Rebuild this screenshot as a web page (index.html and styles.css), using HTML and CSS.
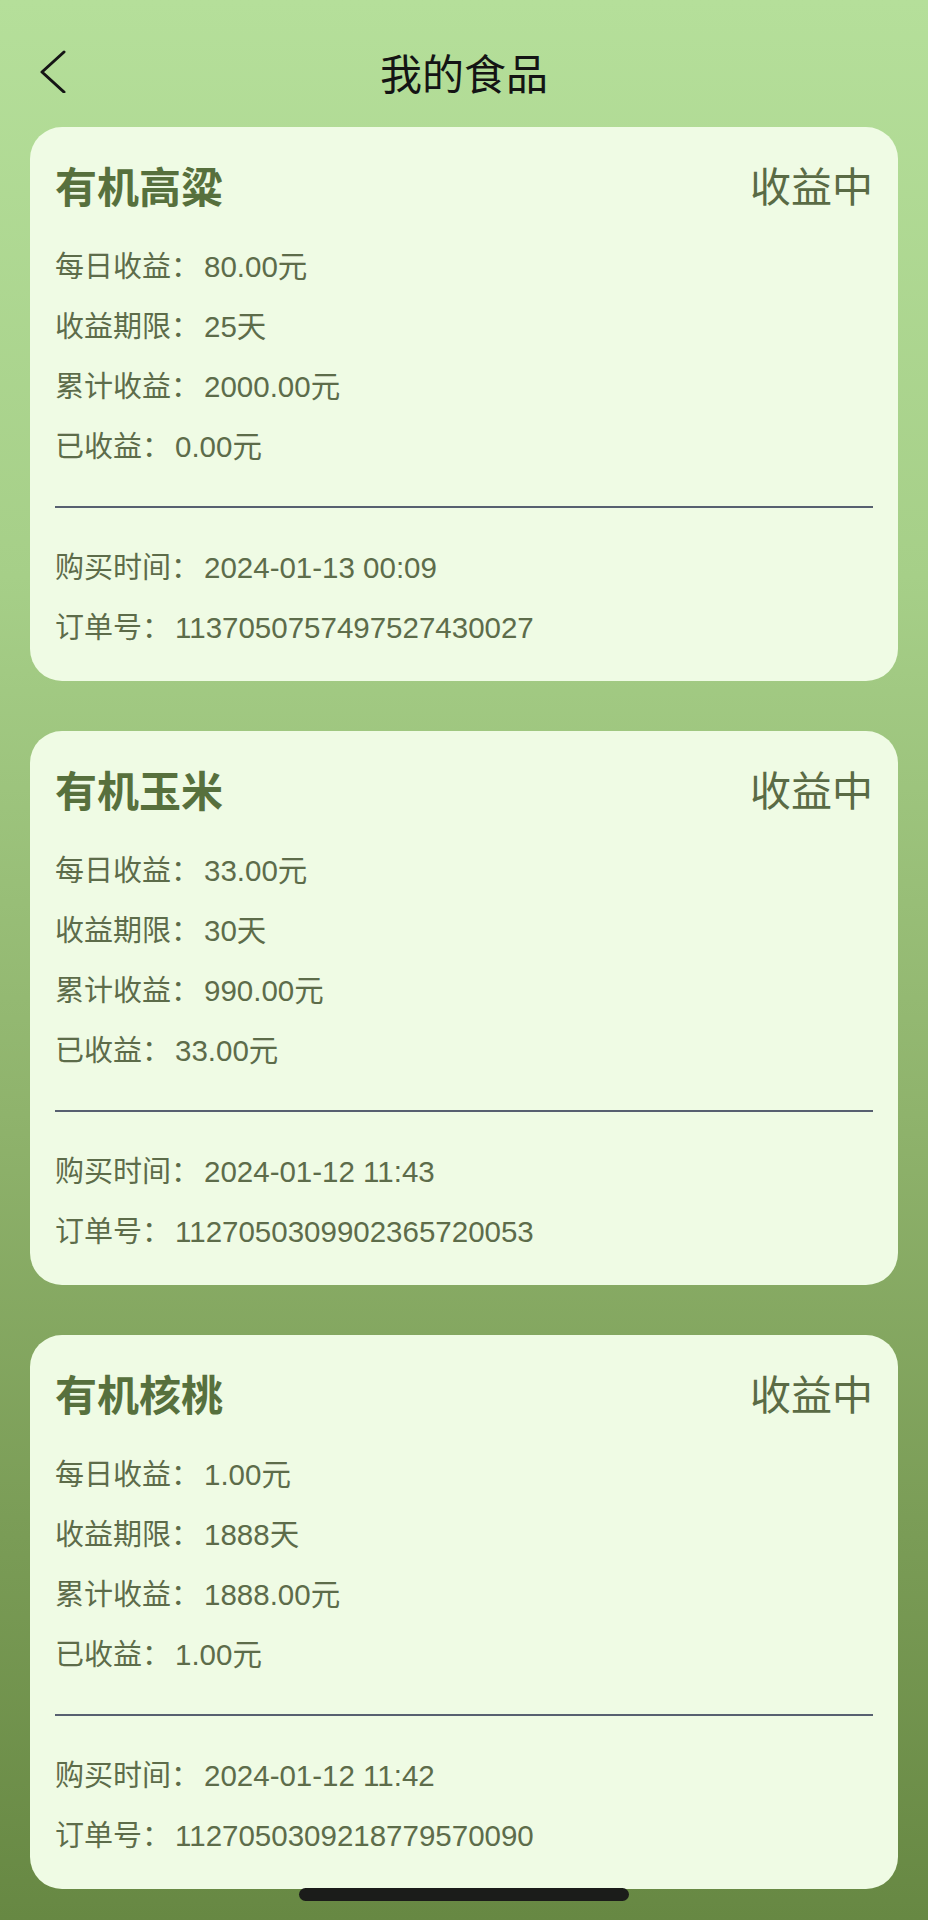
FILE: index.html
```html
<!DOCTYPE html>
<html lang="zh-CN">
<head>
    <meta charset="UTF-8">
    <title>我的食品</title>
    <link rel="stylesheet" href="styles.css">
</head>
<body>
<div class="nav">
    <div class="back">
        <svg width="28" height="44" viewBox="0 0 28 44">
            <polyline points="25,3 3,23 25,43" fill="none" stroke="#151515" stroke-width="3" stroke-linecap="round" stroke-linejoin="round"/>
        </svg>
    </div>
    <div class="nav-title">我的食品</div>
    <div></div>
</div>

<div class="list">
    <div class="card">
        <div class="card-head">
            <span class="card-name">有机高粱</span>
            <span class="card-state">收益中</span>
        </div>
        <div class="row">每日收益：<span class="val">80.00元</span></div>
        <div class="row">收益期限：<span class="val">25天</span></div>
        <div class="row">累计收益：<span class="val">2000.00元</span></div>
        <div class="row">已收益：<span class="val">0.00元</span></div>
        <div class="divider"></div>
        <div class="row">购买时间：<span class="val">2024-01-13 00:09</span></div>
        <div class="row">订单号：<span class="val">1137050757497527430027</span></div>
    </div>

    <div class="card">
        <div class="card-head">
            <span class="card-name">有机玉米</span>
            <span class="card-state">收益中</span>
        </div>
        <div class="row">每日收益：<span class="val">33.00元</span></div>
        <div class="row">收益期限：<span class="val">30天</span></div>
        <div class="row">累计收益：<span class="val">990.00元</span></div>
        <div class="row">已收益：<span class="val">33.00元</span></div>
        <div class="divider"></div>
        <div class="row">购买时间：<span class="val">2024-01-12 11:43</span></div>
        <div class="row">订单号：<span class="val">1127050309902365720053</span></div>
    </div>

    <div class="card">
        <div class="card-head">
            <span class="card-name">有机核桃</span>
            <span class="card-state">收益中</span>
        </div>
        <div class="row">每日收益：<span class="val">1.00元</span></div>
        <div class="row">收益期限：<span class="val">1888天</span></div>
        <div class="row">累计收益：<span class="val">1888.00元</span></div>
        <div class="row">已收益：<span class="val">1.00元</span></div>
        <div class="divider"></div>
        <div class="row">购买时间：<span class="val">2024-01-12 11:42</span></div>
        <div class="row">订单号：<span class="val">1127050309218779570090</span></div>
    </div>
</div>

<div class="home-bar"></div>
</body>
</html>
```

FILE: styles.css
```css
*{
    padding: 0;
    margin: 0;
    box-sizing: border-box;
}
html, body{
    height: 1920px;
}
body{
    position: relative;
    overflow: hidden;
    font-family: "Liberation Sans", "Noto Sans CJK SC", sans-serif;
    background: linear-gradient(180deg, #b5df9a 0%, #a6cf88 30%, #8fb36c 58%, #7a9c56 80%, #678843 100%);
}

/* top bar */
.nav{
    height: 100px;
    margin-top: 21px;
    padding: 0 39px;
    display: grid;
    grid-template-columns: 1fr auto 1fr;
    align-items: center;
}
.back svg{
    display: block;
}
.nav-title{
    font-family: "Noto Sans CJK SC", sans-serif;
    font-size: 42px;
    color: #141414;
}

/* cards */
.list{
    padding: 6px 30px 0;
    display: flex;
    flex-direction: column;
    gap: 50px;
}
.card{
    background-color: #effbe4;
    border-radius: 32px;
    padding: 30px 25px 23px;
}
.card-head{
    height: 54px;
    margin-bottom: 26px;
    display: flex;
    justify-content: space-between;
    align-items: center;
}
.card-name{
    font-family: "Noto Sans CJK SC", sans-serif;
    font-size: 42px;
    font-weight: 700;
    color: #57703d;
}
.card-state{
    font-family: "Noto Sans CJK SC", sans-serif;
    font-size: 41px;
    color: #5a6b45;
}
.row{
    font-size: 29px;
    line-height: 60px;
    color: #5d6c4a;
    white-space: nowrap;
}
.row .val{
    margin-left: 4px;
    font-size: 29.5px;
}
.divider{
    height: 2px;
    margin: 29px 0 30px;
    background-color: #576070;
}

.home-bar{
    position: absolute;
    left: 50%;
    bottom: 19px;
    width: 330px;
    height: 13px;
    margin-left: -165px;
    border-radius: 7px;
    background-color: #1b1c1a;
}
```
